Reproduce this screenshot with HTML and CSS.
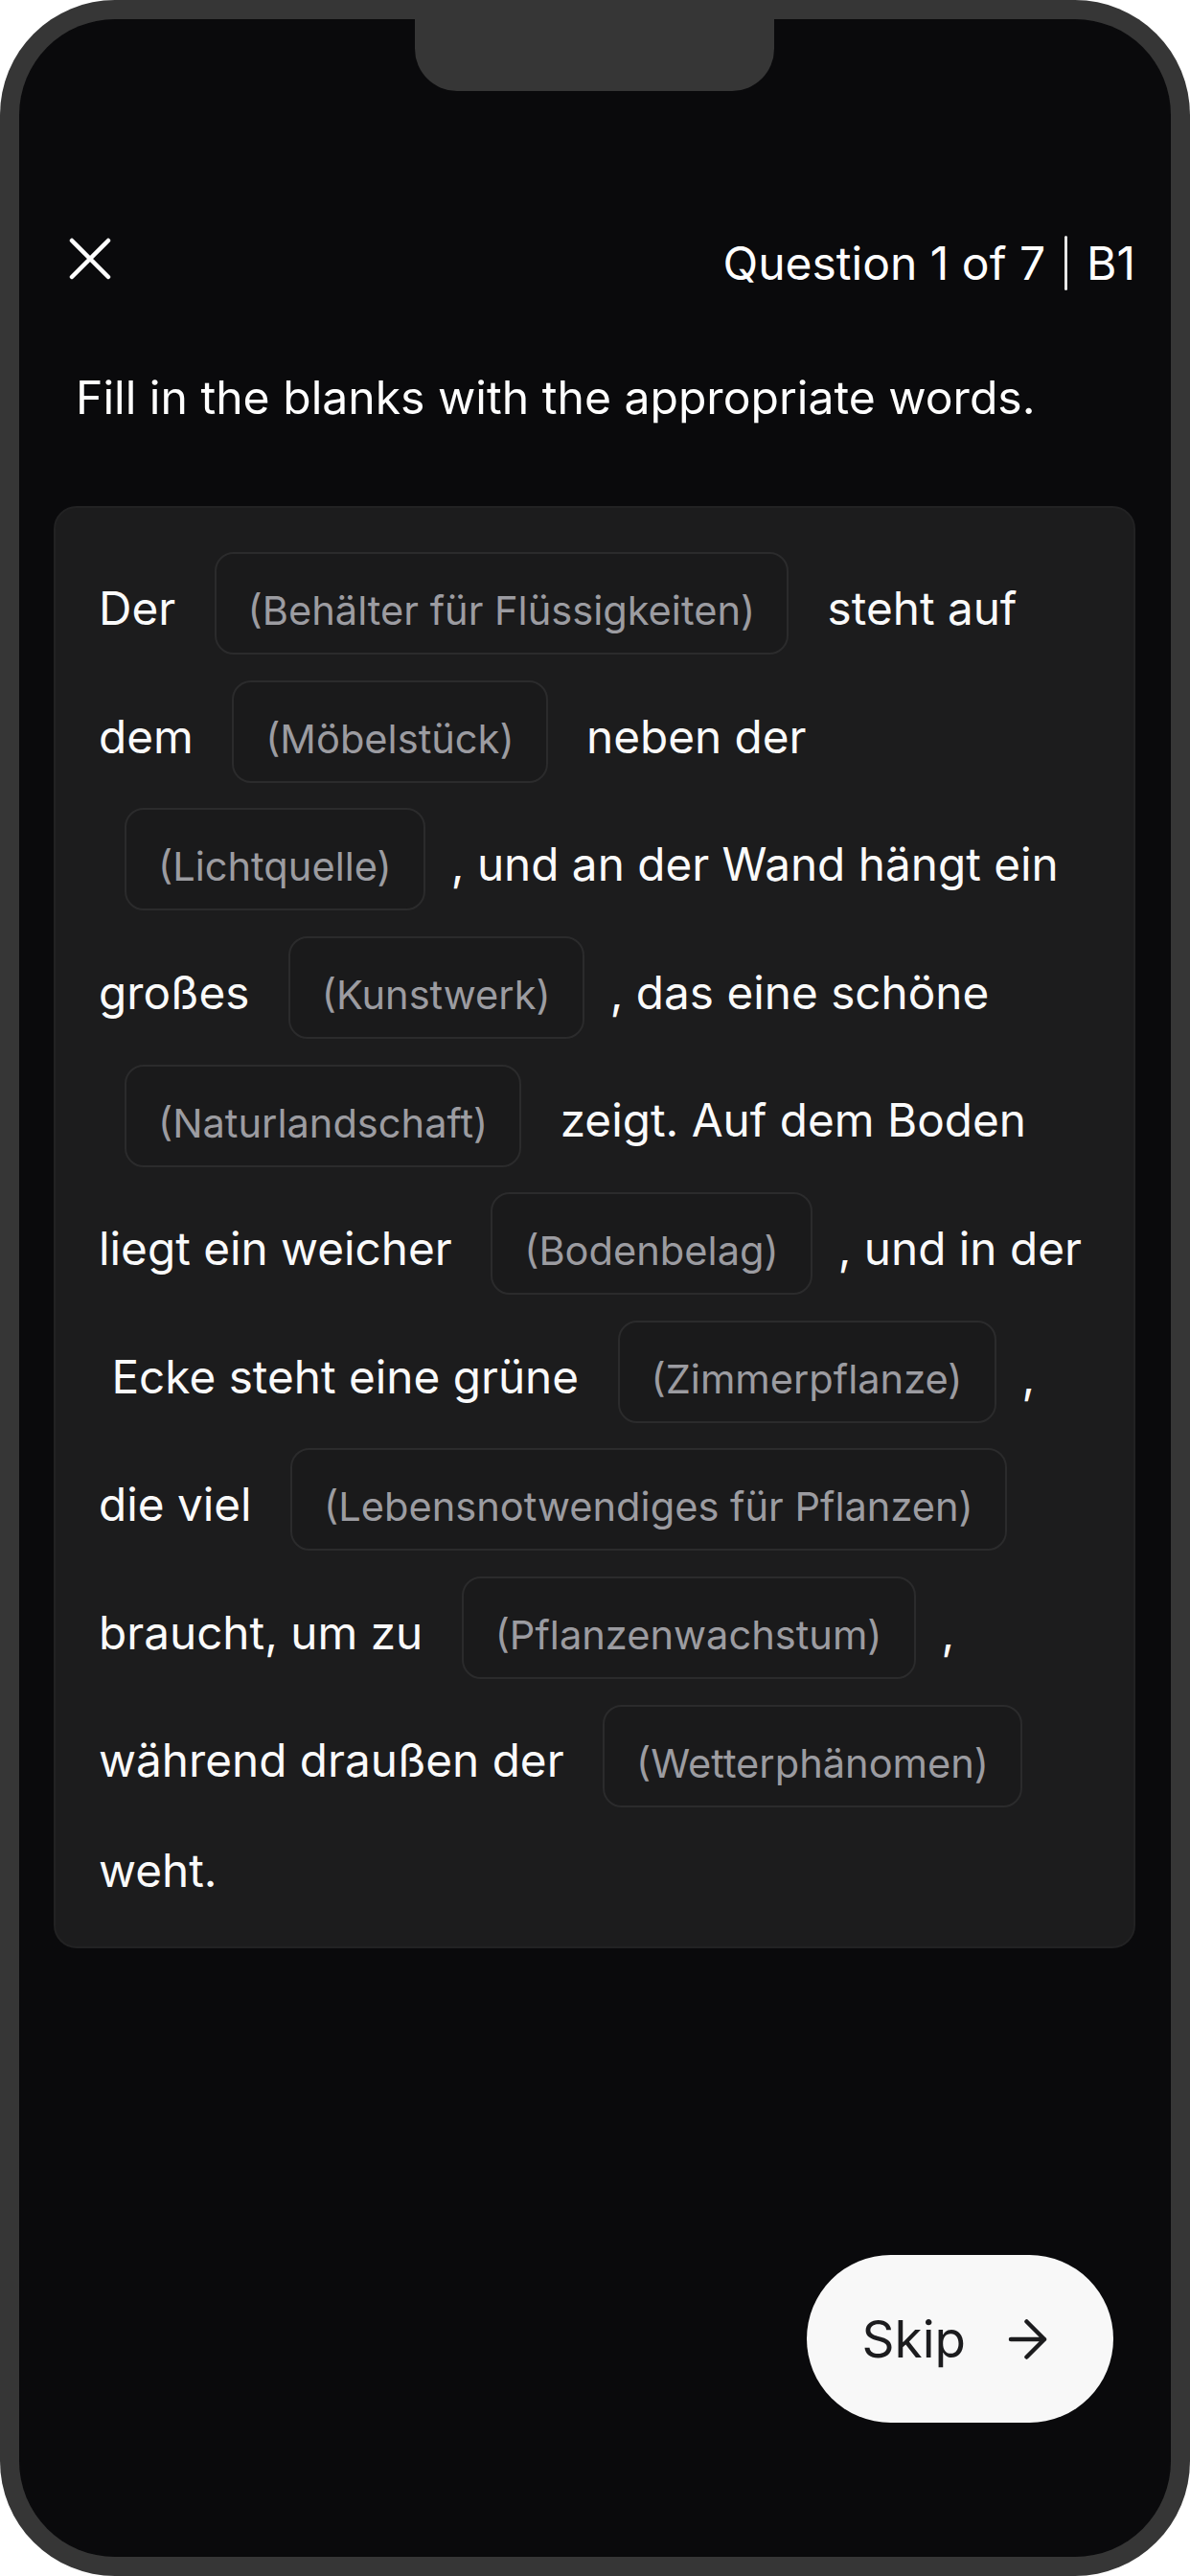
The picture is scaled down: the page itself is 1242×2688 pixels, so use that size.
FILE: index.html
```html
<!DOCTYPE html>
<html lang="de">
<head>
<meta charset="utf-8">
<title>Question 1 of 7</title>
<link rel="stylesheet" href="styles.css">
</head>
<body>
<div class="phone">
  <div class="screen">
    <div class="notch"></div>

    <header class="header">
      <button class="close" aria-label="Close">
        <svg width="44" height="44" viewBox="0 0 44 44" fill="none" stroke="#ffffff" stroke-width="4.5" stroke-linecap="round">
          <path d="M3 3 L41 41 M41 3 L3 41"/>
        </svg>
      </button>
      <div class="progress">
        <span>Question 1 of 7</span>
        <span class="divider"></span>
        <span>B1</span>
      </div>
    </header>

    <p class="instruction">Fill in the blanks with the appropriate words.</p>

    <section class="card">
      <div class="passage"><span class="txt">Der</span> <span class="blank">(Behälter für Flüssigkeiten)</span> <span class="txt">steht auf</span> <span class="txt">dem</span> <span class="blank">(Möbelstück)</span> <span class="txt">neben der</span> <span class="blank">(Lichtquelle)</span><span class="txt">, und an der Wand hängt ein</span> <span class="txt">großes</span> <span class="blank">(Kunstwerk)</span><span class="txt">, das eine schöne</span> <span class="blank">(Naturlandschaft)</span> <span class="txt">zeigt. Auf dem Boden</span> <span class="txt">liegt ein weicher</span> <span class="blank">(Bodenbelag)</span><span class="txt">, und in der</span> <span class="txt">&nbsp;Ecke steht eine grüne</span> <span class="blank">(Zimmerpflanze)</span><span class="txt">,</span> <span class="txt">die viel</span> <span class="blank">(Lebensnotwendiges für Pflanzen)</span> <span class="txt">braucht, um zu</span> <span class="blank">(Pflanzenwachstum)</span><span class="txt">,</span> <span class="txt">während draußen der</span> <span class="blank">(Wetterphänomen)</span> <span class="txt">weht.</span></div>
    </section>

    <footer class="footer">
      <button class="skip">
        <span>Skip</span>
        <svg width="41" height="42" viewBox="0 0 41 42" fill="none" stroke="#1c1c1e" stroke-width="4.5" stroke-linecap="round" stroke-linejoin="round">
          <path d="M3 21 H38 M19.5 2.5 L38 21 L19.5 39.5"/>
        </svg>
      </button>
    </footer>
  </div>
</div>
</body>
</html>
```
FILE: styles.css
```css
* { box-sizing: border-box; }

html, body {
  margin: 0;
  padding: 0;
  background: #ffffff;
}

body {
  font-family: "Inter", "Noto Sans", sans-serif;
  -webkit-font-smoothing: antialiased;
}

.phone {
  width: 1242px;
  height: 2688px;
  padding: 20px;
  background: #363636;
  border-radius: 120px;
}

.screen {
  position: relative;
  height: 100%;
  background: #0a0a0c;
  border-radius: 100px;
  display: flex;
  flex-direction: column;
  overflow: hidden;
}

.notch {
  position: absolute;
  top: 0;
  left: 413px;
  width: 375px;
  height: 75px;
  background: #363636;
  border-radius: 0 0 44px 44px;
}

.header {
  margin-top: 226px;
  padding: 0 37px 0 52px;
  display: flex;
  justify-content: space-between;
  align-items: flex-start;
}

.close {
  margin: 2px 0 0;
  padding: 0;
  border: 0;
  background: none;
  width: 44px;
  height: 44px;
  display: block;
}

.close svg { display: block; }

.progress {
  display: flex;
  align-items: center;
  gap: 20px;
  color: #ffffff;
  font-size: 48px;
  line-height: 57px;
}

.divider {
  width: 3px;
  height: 57px;
  background: #e6e6e6;
  border-radius: 2px;
}

.instruction {
  margin: 83px 0 0;
  padding: 0 40px 0 59px;
  color: #ffffff;
  font-size: 48.1px;
  line-height: 58px;
}

.card {
  margin: 84px 37px 0 36px;
  padding: 33px 45px 25px 45px;
  background: #1c1c1d;
  border: 2px solid #222223;
  border-radius: 24px;
}

.passage {
  margin: 0;
  color: #fafafa;
  font-size: 47.7px;
  line-height: 107.5px;
}

.blank {
  display: inline-block;
  margin: 13.3px 27px;
  padding: 34px 33px 19px;
  border: 2px solid #2b2b2c;
  border-radius: 20px;
  background: #1a1a1b;
  color: #9c9ca1;
  font-size: 41.6px;
  line-height: 50px;
  vertical-align: baseline;
}

.footer {
  margin-top: auto;
  padding: 0 60px 140px 0;
  display: flex;
  justify-content: flex-end;
}

.skip {
  height: 175px;
  padding: 0 69px 0 58px;
  border: 0;
  border-radius: 88px;
  background: #f8f8f8;
  color: #1c1c1e;
  font-family: "Inter", "Noto Sans", sans-serif;
  font-size: 53px;
  display: flex;
  align-items: center;
  gap: 44px;
}

.skip svg { display: block; }
```
